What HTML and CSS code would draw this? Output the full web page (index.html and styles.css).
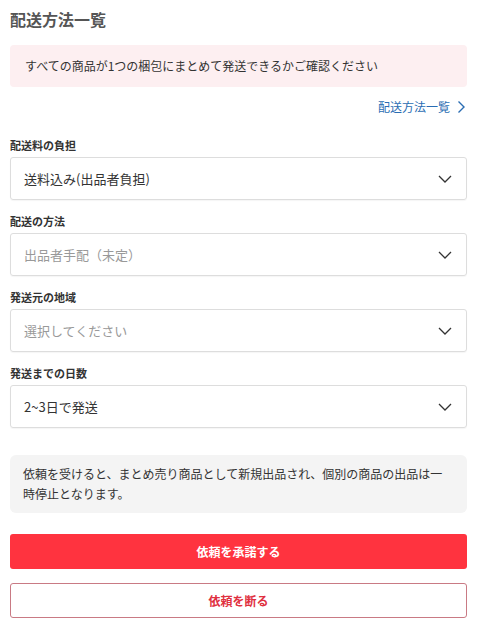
FILE: index.html
```html
<!DOCTYPE html>
<html lang="ja">
<head>
  <meta charset="UTF-8">
  <title>配送方法一覧</title>
  <link rel="stylesheet" href="styles.css">
</head>
<body>
  <div class="pagina">
    <h1 class="titulo">配送方法一覧</h1>

    <p class="aviso">すべての商品が1つの梱包にまとめて発送できるかご確認ください</p>

    <div class="enlace-fila">
      <a class="enlace" href="#">配送方法一覧
        <svg width="10" height="14" viewBox="0 0 10 14"><path d="M2.5 1.5 L8 7 L2.5 12.5" fill="none" stroke="#2a6db3" stroke-width="1.4"/></svg>
      </a>
    </div>

    <!-- campos -->
    <div class="campo">
      <div class="etiqueta">配送料の負担</div>
      <div class="selector">
        <span>送料込み(出品者負担)</span>
        <svg class="flecha" width="14" height="8" viewBox="0 0 14 8"><path d="M1 1 L7 7 L13 1" fill="none" stroke="#333" stroke-width="1.3"/></svg>
      </div>
    </div>

    <div class="campo">
      <div class="etiqueta">配送の方法</div>
      <div class="selector vacio">
        <span>出品者手配（未定）</span>
        <svg class="flecha" width="14" height="8" viewBox="0 0 14 8"><path d="M1 1 L7 7 L13 1" fill="none" stroke="#333" stroke-width="1.3"/></svg>
      </div>
    </div>

    <div class="campo">
      <div class="etiqueta">発送元の地域</div>
      <div class="selector vacio">
        <span>選択してください</span>
        <svg class="flecha" width="14" height="8" viewBox="0 0 14 8"><path d="M1 1 L7 7 L13 1" fill="none" stroke="#333" stroke-width="1.3"/></svg>
      </div>
    </div>

    <div class="campo">
      <div class="etiqueta">発送までの日数</div>
      <div class="selector">
        <span>2~3日で発送</span>
        <svg class="flecha" width="14" height="8" viewBox="0 0 14 8"><path d="M1 1 L7 7 L13 1" fill="none" stroke="#333" stroke-width="1.3"/></svg>
      </div>
    </div>

    <p class="nota">依頼を受けると、まとめ売り商品として新規出品され、個別の商品の出品は一時停止となります。</p>

    <button class="boton primario">依頼を承諾する</button>
    <button class="boton secundario">依頼を断る</button>
  </div>
</body>
</html>
```

FILE: styles.css
```css
body { margin:0; background:#fff; font-family:"Noto Sans CJK JP", "Noto Sans", sans-serif; color:#333; }
.pagina { width:457px; margin-left:10px; padding-top:9px; }
.titulo { margin:0; font-size:16px; line-height:20px; font-weight:bold; color:#555; }
.aviso { margin:16px 0 0; background:#fdeff1; border-radius:4px; padding:12px 15px; font-size:12px; line-height:18px; color:#333; }
.enlace-fila { margin-top:12px; display:flex; justify-content:flex-end; }
.enlace { display:flex; align-items:center; gap:6px; font-size:12px; line-height:16px; color:#2a6db3; text-decoration:none; margin-right:1px; }
.campo { margin-top:13px; }
.enlace-fila + .campo { margin-top:22px; }
.etiqueta { font-size:11px; line-height:16px; font-weight:bold; color:#333; margin-bottom:4px; }
.selector { height:41px; border:1px solid #ddd; border-radius:3px; display:flex; align-items:center; justify-content:space-between; padding:0 13px; font-size:13px; color:#333; box-shadow:0 1px 1px rgba(0,0,0,0.04); }
.selector.vacio { color:#999; }
.flecha { margin-right:1px; }
.nota { margin:27px 0 0; background:#f4f4f4; border-radius:6px; padding:9px 13px; font-size:12px; line-height:20px; color:#333; }
.boton { display:block; width:100%; height:35px; border-radius:3px; font-family:inherit; font-size:12px; font-weight:bold; cursor:pointer; }
.primario { margin-top:21px; background:#ff333f; color:#fff; border:none; }
.secundario { margin-top:14px; background:#fff; color:#e0303f; border:1px solid #c97a84; }
```
